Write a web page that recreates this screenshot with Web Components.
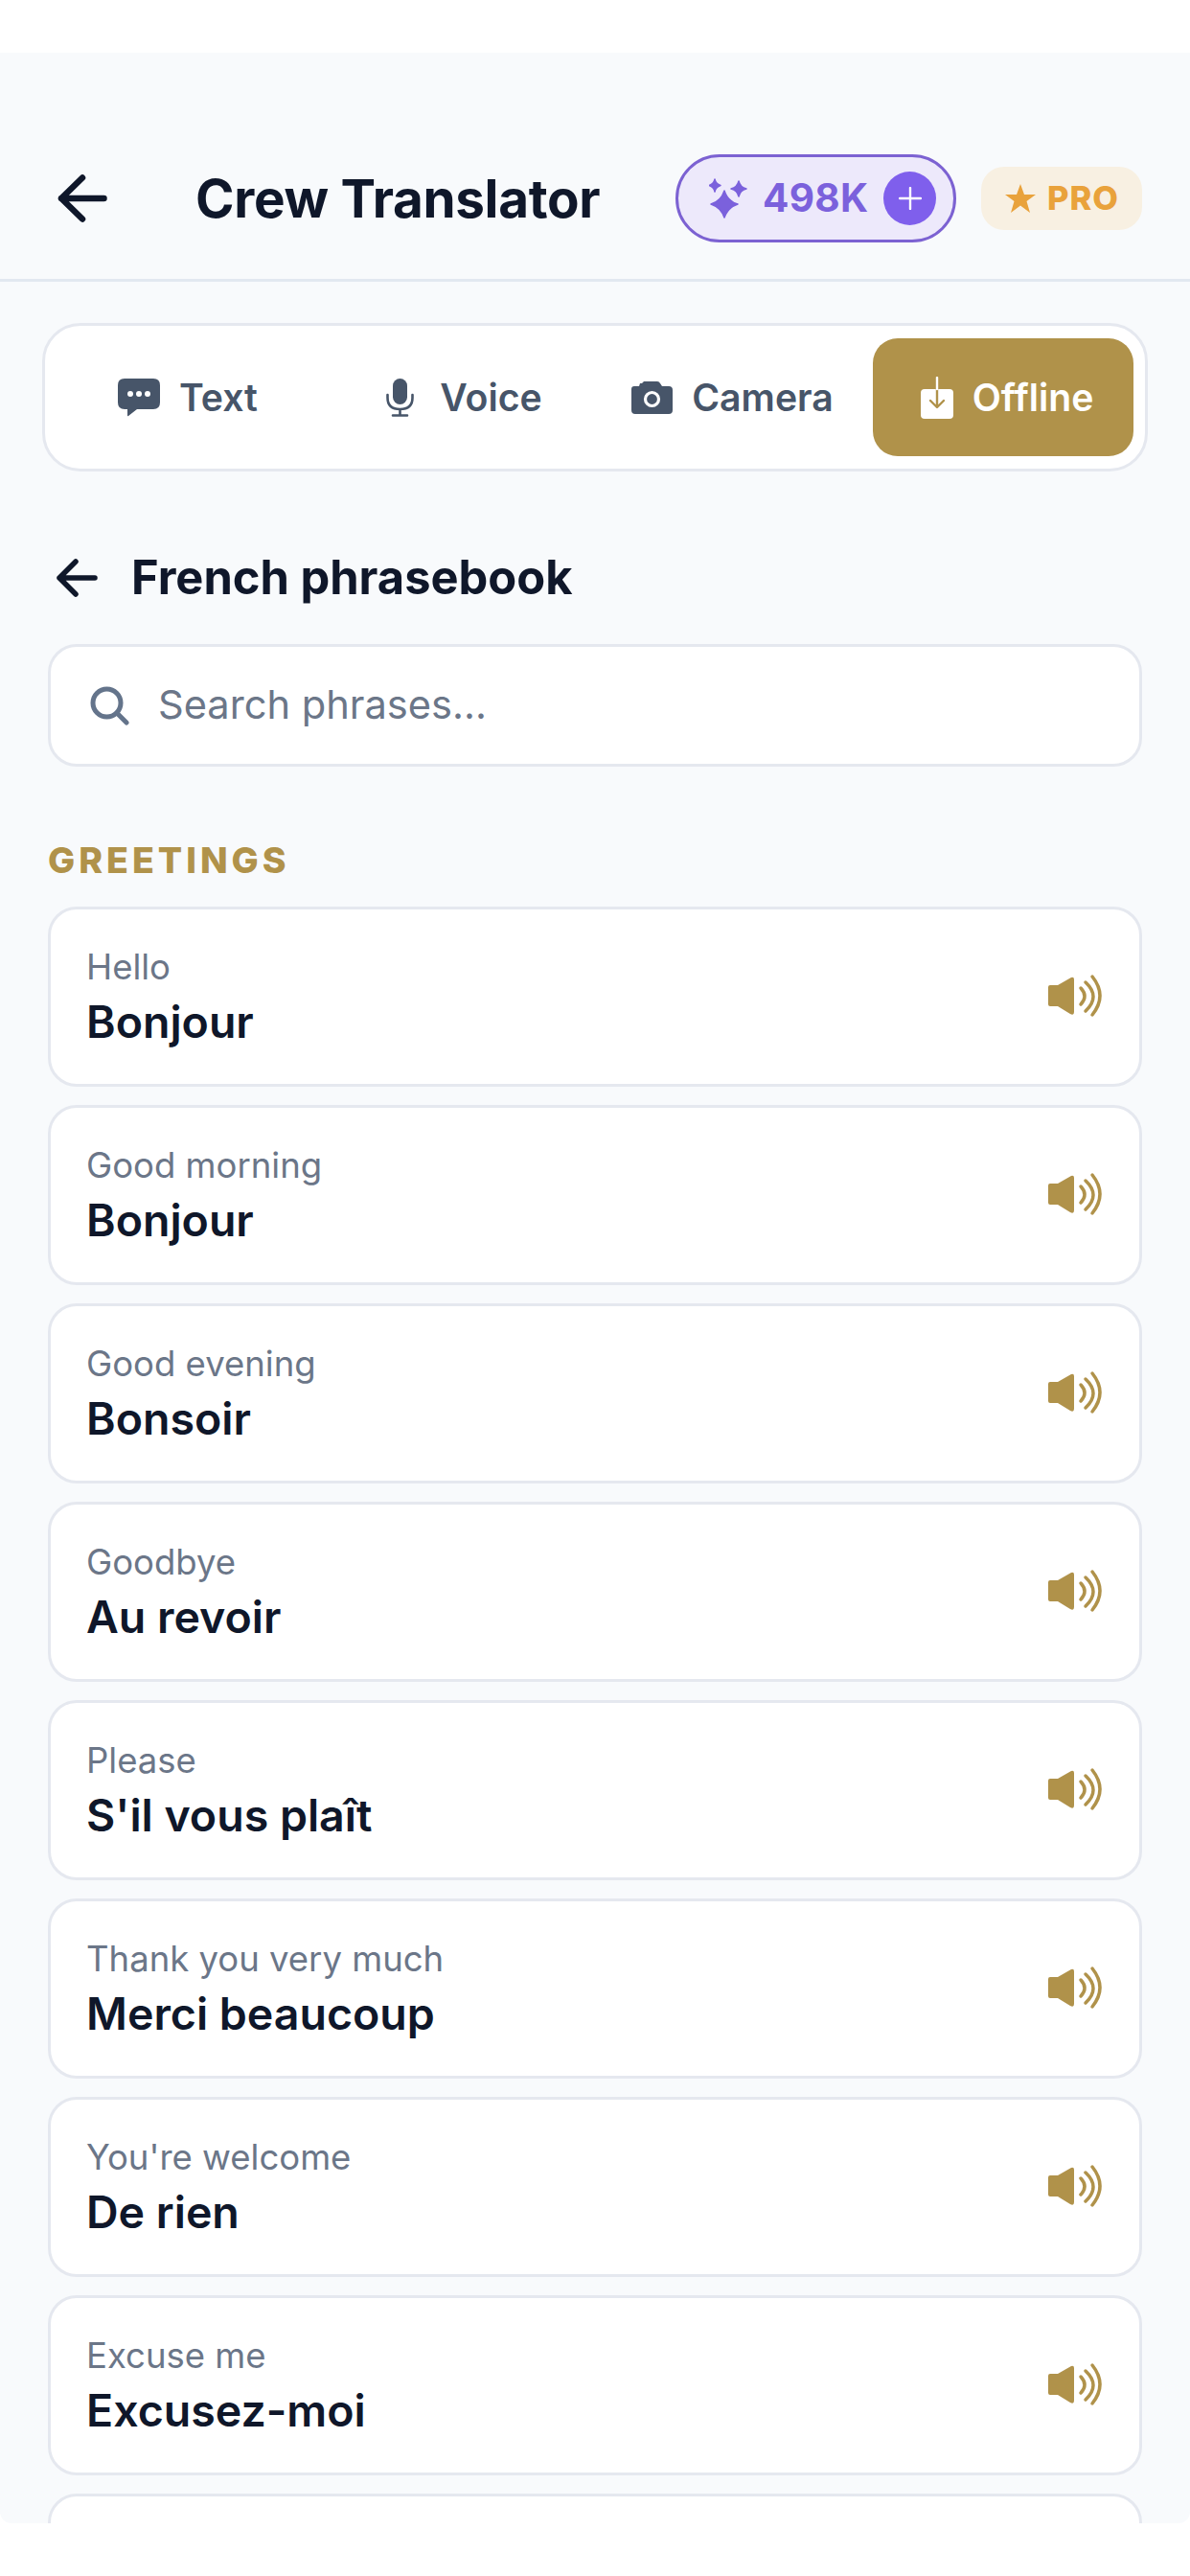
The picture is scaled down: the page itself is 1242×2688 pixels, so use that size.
<!DOCTYPE html>
<html lang="en"><head><meta charset="utf-8"><title>Crew Translator</title>
<style>
html,body{margin:0;padding:0;background:#fff;font-family:Inter,"Liberation Sans",sans-serif}
body{height:2688px;overflow:hidden}
</style></head><body>
<crew-app>
  <crew-header title="Crew Translator" credits="498K"></crew-header>
  <mode-tabs>
    <mode-tab icon="text" label="Text" shift="2"></mode-tab>
    <mode-tab icon="voice" label="Voice" shift="11"></mode-tab>
    <mode-tab icon="camera" label="Camera" shift="3"></mode-tab>
    <mode-tab icon="offline" label="Offline" shift="8" active></mode-tab>
  </mode-tabs>
  <phrase-heading>French phrasebook</phrase-heading>
  <search-box placeholder="Search phrases..."></search-box>
  <section-label>GREETINGS</section-label>
  <phrase-list>
    <phrase-card en="Hello" fr="Bonjour"></phrase-card>
    <phrase-card en="Good morning" fr="Bonjour"></phrase-card>
    <phrase-card en="Good evening" fr="Bonsoir"></phrase-card>
    <phrase-card en="Goodbye" fr="Au revoir"></phrase-card>
    <phrase-card en="Please" fr="S'il vous plaît"></phrase-card>
    <phrase-card en="Thank you very much" fr="Merci beaucoup"></phrase-card>
    <phrase-card en="You're welcome" fr="De rien"></phrase-card>
    <phrase-card en="Excuse me" fr="Excusez-moi"></phrase-card>
    <phrase-card></phrase-card>
  </phrase-list>
</crew-app>
<script>
const def=(name,html)=>customElements.define(name,class extends HTMLElement{
  connectedCallback(){ if(this.shadowRoot) return;
    const a=n=>this.getAttribute(n)||'';
    this.attachShadow({mode:'open'}).innerHTML=typeof html==='function'?html(a,this):html;
  }
});
const ICONS={
 text:'<svg width="44" height="40" viewBox="0 0 44 40"><path fill="currentColor" d="M7 0H37Q44 0 44 7V25Q44 32 37 32H20L11 39Q10 40 10 38V32H7Q0 32 0 25V7Q0 0 7 0Z"/><g fill="#fff"><circle cx="13" cy="16" r="3"/><circle cx="22" cy="16" r="3"/><circle cx="31" cy="16" r="3"/></g></svg>',
 voice:'<svg style="margin-right:7px" width="29" height="40" viewBox="0 0 29 40"><rect x="7" y="0" width="15" height="27" rx="7.5" fill="currentColor"/><path fill="none" stroke="currentColor" stroke-width="2.6" stroke-linecap="round" d="M1.5 17V20Q1.5 32 14.5 32Q27.5 32 27.5 20V17M14.5 32V38.5M7 38.5H22"/></svg>',
 camera:'<svg width="43" height="34" viewBox="0 0 43 34"><path fill="currentColor" d="M3 5H8L9 2H11L13 0H27Q29 0 30 2L32 5H39Q43 5 43 9V30Q43 34 39 34H4Q0 34 0 30V8Q0 5 3 5Z"/><circle cx="21.500" cy="18.500" r="7" fill="none" stroke="#fff" stroke-width="3.200"/></svg>',
 offline:'<svg width="34" height="44" viewBox="0 0 34 44"><path fill="currentColor" d="M4 13H30Q34 13 34 17V40Q34 44 30 44H4Q0 44 0 40V17Q0 13 4 13Z"/><path fill="none" stroke="#b0924a" stroke-width="2.400" stroke-linecap="round" stroke-linejoin="round" d="M17 13V31M10 25L17 32L24 25"/><path fill="none" stroke="currentColor" stroke-width="2.400" stroke-linecap="round" d="M17 1V13"/></svg>'
};
def('crew-app',`<style>:host{display:flex;flex-direction:column;margin-top:55px;height:2578px;background:#f8fafc;overflow:hidden;border-radius:0 0 12px 12px;color:#0f172a}</style><slot></slot>`);
def('crew-header',a=>`<style>
:host{display:flex;align-items:center;height:239px;box-sizing:border-box;padding:106px 50px 38px 60px;border-bottom:3px solid #e2e8f0;flex:none}
svg{display:block;flex:none}
h1{margin:0 0 0 92px;font:700 54.800px/1 Inter,sans-serif;color:#0f172a;white-space:nowrap;letter-spacing:-.3px}
.gap{flex:1}
</style>
<svg width="52" height="50" viewBox="0 0 52 50"><path fill="none" stroke="#0f172a" stroke-width="6.500" stroke-linecap="round" stroke-linejoin="round" d="M48.500 25H4M26 3.500L4 25L26 46.500"/></svg>
<h1>${a('title')}</h1><span class="gap"></span>
<credit-pill value="${a('credits')}"></credit-pill><pro-badge></pro-badge>`);
def('credit-pill',a=>`<style>
:host{display:flex;align-items:center;box-sizing:border-box;width:293px;height:92px;border:3px solid #7c62d2;border-radius:46px;background:#ede9fb;padding-left:32px;color:#7b61dc;flex:none}
svg{display:block;flex:none}
b{font:700 40.500px/1 Inter,sans-serif;margin-left:14px;letter-spacing:.3px}
i{margin-left:auto;margin-right:18px;width:55px;height:56px;border-radius:50%;background:#7f5fec;display:flex;align-items:center;justify-content:center}
</style>
<svg width="42" height="42" viewBox="0 0 42 42"><g fill="currentColor" stroke="currentColor" stroke-width="1.500" stroke-linejoin="round"><path d="M16 13Q19.500 24 30 27Q19.500 30.500 16 41Q12.500 30.500 2 27Q12.500 24 16 13Z"/><path d="M6 1Q7 6 12 7.500Q7 9 6 14Q5 9 0 7.500Q5 6 6 1Z"/><path d="M31 3Q32.500 9.500 39 11Q32.500 12.500 31 19Q29.500 12.500 23 11Q29.500 9.500 31 3Z"/></g></svg>
<b>${a('value')}</b>
<i><svg width="24" height="24" viewBox="0 0 24 24"><path fill="none" stroke="#fff" stroke-width="2.400" stroke-linecap="round" d="M12 1V23M1 12H23"/></svg></i>`);
def('pro-badge',`<style>
:host{display:flex;align-items:center;box-sizing:border-box;width:168px;height:66px;margin-left:26px;border-radius:24px;background:#f8f0e2;padding-left:25px;color:#e9a23b;flex:none}
svg{display:block;flex:none}
b{font:800 34.500px/1 Inter,sans-serif;margin-left:12px;letter-spacing:1px}
</style>
<svg width="32" height="30" viewBox="0 0 32 30"><path fill="currentColor" d="M16 0L20 11H32L22.500 18L26 30L16 22.500L6 30L9.500 18L0 11H12Z"/></svg><b>PRO</b>`);
def('mode-tabs',`<style>
:host{display:grid;grid-template-columns:repeat(4,1fr);column-gap:12px;box-sizing:border-box;margin:43px 44px 0;width:1154px;height:155px;border:3px solid #e5e8ef;border-radius:40px;background:#fff;padding:13px 12px;flex:none}
</style><slot></slot>`);
def('mode-tab',(a,el)=>{const on=el.hasAttribute('active');return `<style>
:host{display:flex;align-items:center;justify-content:center;gap:20px;box-sizing:border-box;padding-left:${a('shift')||0}px;border-radius:26px;color:${on?'#fff':'#475569'};background:${on?'#b0924a':'transparent'}}
svg{display:block;flex:none}
span{font:600 39.200px/1 Inter,sans-serif;white-space:nowrap}
</style>${ICONS[a('icon')]}<span>${a('label')}</span>`});
def('phrase-heading',`<style>
:host{display:flex;align-items:center;gap:35px;margin:82px 0 0 59px;height:58px;font:700 48.800px/1 Inter,sans-serif;color:#0f172a;flex:none}
svg{display:block;flex:none}
</style>
<svg width="43" height="40" viewBox="0 0 43 40"><path fill="none" stroke="#0f172a" stroke-width="5.500" stroke-linecap="round" stroke-linejoin="round" d="M40 20H3M20 3L3 20L20 37"/></svg><span><slot></slot></span>`);
def('search-box',a=>`<style>
:host{display:flex;align-items:center;box-sizing:border-box;margin:40px 50px 0;height:128px;border:3px solid #e5e8ef;border-radius:30px;background:#fff;padding-left:41px;flex:none}
svg{display:block;flex:none}
span{margin-left:30px;font:400 41.600px/1 Inter,sans-serif;color:#6b7688}
</style>
<svg width="41" height="41" viewBox="0 0 41 41"><circle cx="17.500" cy="17.500" r="14.500" fill="none" stroke="#64748b" stroke-width="5"/><path fill="none" stroke="#64748b" stroke-width="5" stroke-linecap="round" d="M28 28L38 38"/></svg>
<span>${a('placeholder')}</span>`);
def('section-label',`<style>
:host{display:block;margin:75px 0 0 50px;height:46px;font:800 37.500px/46px Inter,sans-serif;letter-spacing:4px;color:#b0924a;flex:none}
</style><slot></slot>`);
def('phrase-list',`<style>:host{display:flex;flex-direction:column;gap:19px;margin:0 50px;padding-top:25px;flex:none}</style><slot></slot>`);
def('phrase-card',a=>`<style>
:host{display:flex;align-items:center;box-sizing:border-box;height:188px;border:3px solid #e5e8ef;border-radius:30px;background:#fff;padding:0 41px 0 37px;flex:none}
div{flex:1;min-width:0;padding-top:1px}
small{display:block;font:400 36.500px/46px Inter,sans-serif;color:#6b7688}
b{display:block;margin-top:5px;font:600 46.500px/58px Inter,sans-serif;color:#0f172a}
svg{display:block;flex:none;overflow:visible}
</style>
${a('fr')?`<div><small>${a('en')}</small><b>${a('fr')}</b></div>
<svg width="54" height="44" viewBox="0 0 54 44"><path fill="#b0924a" d="M2 10H10L24 2Q27 1 27 4V38Q27 42 23 40L10 32H2Q0 32 0 30V12Q0 10 2 10Z"/><path fill="none" stroke="#b0924a" stroke-width="3.500" stroke-linecap="round" d="M34 13Q42 21.500 34 30M39 7Q55 22 39 37M46 1Q62 21 46 41"/></svg>`:''}`);
</script>
</body></html>
